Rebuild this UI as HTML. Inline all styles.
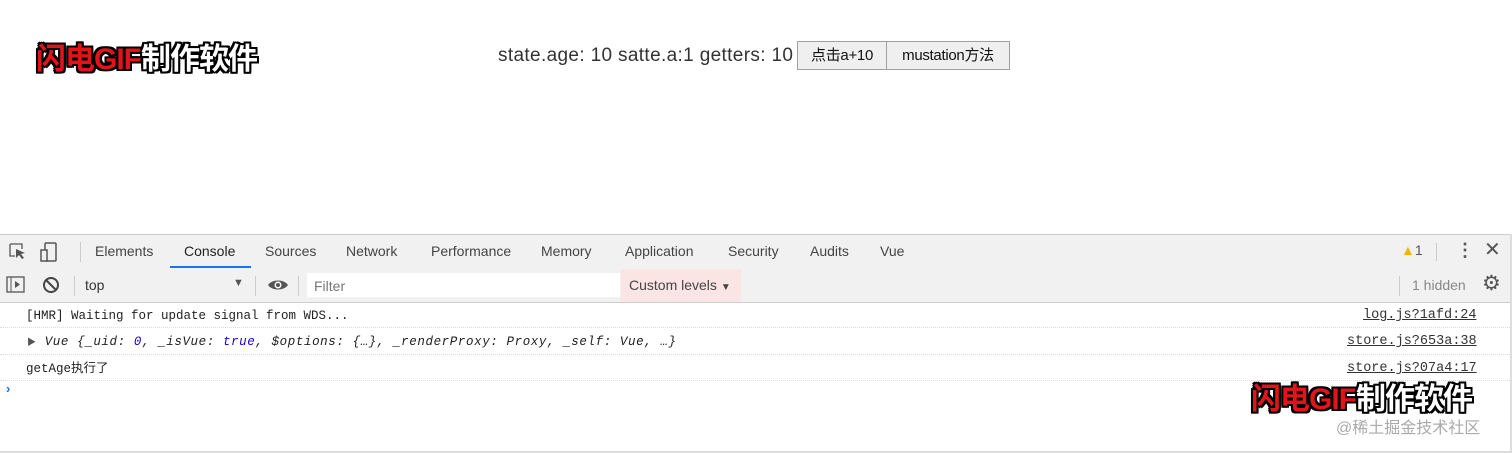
<!DOCTYPE html>
<html><head><meta charset="utf-8"><style>
body{margin:0;width:1512px;height:453px;overflow:hidden;background:#fff;font-family:"Liberation Sans","Noto Sans CJK SC",sans-serif;position:relative}
.abs{position:absolute;white-space:nowrap;line-height:1.15}
.wm{font-weight:bold;font-size:30px;letter-spacing:-1px;line-height:34px;text-shadow:-2px 0 #000,2px 0 #000,0 -2px #000,0 2px #000,-2px -2px #000,2px 2px #000,-2px 2px #000,2px -2px #000}
.wm .r{color:#e0141a}.wm .w{color:#fff}
.btn{position:absolute;top:41px;height:29px;border:1px solid #a0a0a0;background:#efefef;font-size:15px;line-height:27px;text-align:center;box-sizing:border-box;color:#111;letter-spacing:-0.3px}
.tab{position:absolute;top:243px;font-size:14px;color:#444}
.mono{font-family:"Liberation Mono","Noto Sans CJK SC",monospace;font-size:12.5px;color:#222;line-height:16px}
.link{text-decoration:underline;color:#333;font-size:13.5px}
</style></head><body>
<div class="abs wm" style="left:36px;top:43px"><span class="r">闪电GIF</span><span class="w">制作软件</span></div>
<div class="abs" style="left:498px;top:45px;font-size:19px;letter-spacing:0.35px;color:#333">state.age: 10 satte.a:1 getters: 10</div>
<div class="btn" style="left:797px;width:90px">点击a+10</div>
<div class="btn" style="left:886px;width:124px">mustation方法</div>

<div class="abs" style="left:0;top:234px;width:1512px;height:34px;background:#f1f1f1;border-top:1px solid #ccc;border-bottom:1px solid #ccc"></div>
<svg class="abs" style="left:8px;top:242px" width="20" height="20"><path d="M2 2h12v5M2 2v12h5" stroke="#555" fill="none" stroke-width="1.3"/><path d="M8 7l9 4-4 1 3 4-2 1-3-4-3 3z" fill="#555"/></svg>
<svg class="abs" style="left:38px;top:241px" width="22" height="22"><rect x="7" y="2" width="11" height="18" rx="1" stroke="#555" fill="none" stroke-width="1.5"/><rect x="3" y="9" width="6" height="11" stroke="#555" fill="#f1f1f1" stroke-width="1.5"/></svg>
<div class="abs" style="left:80px;top:242px;width:1px;height:20px;background:#ccc"></div>
<div class="tab" style="left:95px">Elements</div>
<div class="tab" style="left:184px;color:#222">Console</div>
<div class="abs" style="left:170px;top:266px;width:81px;height:2px;background:#1a73e8"></div>
<div class="tab" style="left:265px">Sources</div>
<div class="tab" style="left:346px">Network</div>
<div class="tab" style="left:431px">Performance</div>
<div class="tab" style="left:541px">Memory</div>
<div class="tab" style="left:625px">Application</div>
<div class="tab" style="left:728px">Security</div>
<div class="tab" style="left:810px">Audits</div>
<div class="tab" style="left:880px">Vue</div>
<div class="abs" style="left:1401px;top:242px;font-size:14px;color:#555"><span style="color:#f2b600">▲</span>1</div>
<div class="abs" style="left:1436px;top:243px;width:1px;height:18px;background:#ccc"></div>
<div class="abs" style="left:1456px;top:240px;font-size:18px;font-weight:bold;color:#555">⋮</div>
<div class="abs" style="left:1484px;top:239px;font-size:20px;color:#555">✕</div>

<div class="abs" style="left:0;top:269px;width:1512px;height:33px;background:#f1f1f1;border-bottom:1px solid #ccc"></div>
<svg class="abs" style="left:6px;top:276px" width="20" height="18"><rect x="1" y="1" width="17" height="15" stroke="#555" fill="none" stroke-width="1.3"/><path d="M5 1v15" stroke="#555"/><path d="M9 5l5 3.5-5 3.5z" fill="#555"/></svg>
<svg class="abs" style="left:42px;top:276px" width="18" height="18"><circle cx="9" cy="9" r="7" stroke="#444" fill="none" stroke-width="2"/><path d="M4 4l10 10" stroke="#444" stroke-width="2"/></svg>
<div class="abs" style="left:74px;top:276px;width:1px;height:20px;background:#ccc"></div>
<div class="abs" style="left:85px;top:277px;font-size:14px;color:#333">top</div>
<div class="abs" style="left:233px;top:277px;font-size:11px;color:#555">▼</div>
<div class="abs" style="left:255px;top:276px;width:1px;height:20px;background:#ccc"></div>
<svg class="abs" style="left:267px;top:278px" width="22" height="14"><path d="M1 7C5 1 17 1 21 7C17 13 5 13 1 7z" fill="#555"/><circle cx="11" cy="7" r="3.5" fill="#fff"/><circle cx="11" cy="7" r="2" fill="#555"/></svg>
<div class="abs" style="left:298px;top:276px;width:1px;height:20px;background:#ccc"></div>
<div class="abs" style="left:307px;top:273px;width:313px;height:24px;background:#fff"></div>
<div class="abs" style="left:314px;top:278px;font-size:14px;color:#777">Filter</div>
<div class="abs" style="left:621px;top:269px;width:120px;height:33px;background:#fbe4e4"></div>
<div class="abs" style="left:629px;top:277px;font-size:14px;color:#444">Custom levels <span style="font-size:10px">▼</span></div>
<div class="abs" style="left:1399px;top:276px;width:1px;height:20px;background:#ccc"></div>
<div class="abs" style="left:1412px;top:277px;font-size:14px;color:#888">1 hidden</div>
<div class="abs" style="left:1482px;top:272px;font-size:21px;color:#555">⚙</div>

<div class="abs mono" style="left:26px;top:308px">[HMR] Waiting for update signal from WDS...</div>
<div class="abs mono link" style="left:1363px;top:308px">log.js?1afd:24</div>
<div class="abs" style="left:0;top:327px;width:1512px;border-top:1px dotted #ddd"></div>
<div class="abs mono" style="left:27px;top:334px;font-style:italic;letter-spacing:0.6px"><span style="font-size:9px;font-style:normal;color:#555">▶</span> Vue {_uid: <span style="color:#1c00cf">0</span>, _isVue: <span style="color:#1c00cf">true</span>, $options: {…}, _renderProxy: Proxy, _self: Vue, …}</div>
<div class="abs mono link" style="left:1347px;top:334px">store.js?653a:38</div>
<div class="abs" style="left:0;top:354px;width:1512px;border-top:1px dotted #ddd"></div>
<div class="abs mono" style="left:26px;top:361px">getAge执行了</div>
<div class="abs mono link" style="left:1347px;top:361px">store.js?07a4:17</div>
<div class="abs" style="left:0;top:380px;width:1512px;border-top:1px dotted #ddd"></div>
<div class="abs" style="left:6px;top:382px;font-size:13px;color:#1a73e8;font-weight:bold">›</div>

<div class="abs wm" style="left:1251px;top:383px"><span class="r">闪电GIF</span><span class="w">制作软件</span></div>
<div class="abs" style="left:1336px;top:420px;font-size:16px;color:#aaa">@稀土掘金技术社区</div>
<div class="abs" style="left:0;top:451px;width:1512px;height:2px;background:#ddd"></div>
<div class="abs" style="left:1510px;top:234px;width:2px;height:219px;background:#ddd"></div>
</body></html>
